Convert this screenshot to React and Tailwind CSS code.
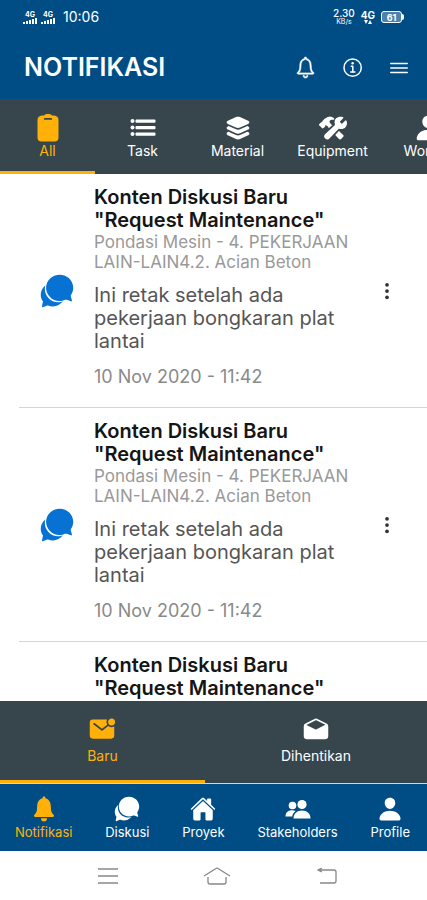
import React, { useState } from "react";
import clsx from "clsx";
import {
  IoIosNotifications,
  IoIosNotificationsOutline,
  IoIosChatbubbles,
} from "react-icons/io";
import {
  IoInformationCircleOutline,
  IoMenuOutline,
  IoLayers,
  IoPerson,
  IoHome,
  IoConstruct,
  IoMailUnread,
  IoMailOpen,
  IoEllipsisVertical,
} from "react-icons/io5";

const Clipboard = ({ size }) => (
  <svg viewBox="0 0 28 28" width={size} height={size} fill="currentColor">
    <path
      fillRule="evenodd"
      d="M8 1.500h2Q11 0 12.500 0h3Q17 0 18 1.500h2Q24.500 2 24.500 6v17.500q0 4-4 4h-13q-4 0-4-4V6Q3.500 2 8 1.500ZM11 4q-1.200 0-1.200.9t1.200.9h6q1.200 0 1.200-.9T17 4Z"
    />
  </svg>
);

const List = ({ size }) => (
  <svg viewBox="0 0 28 28" width={size} height={size} fill="currentColor">
    <circle cx="3.500" cy="7" r="2" />
    <circle cx="3.500" cy="13.500" r="2" />
    <circle cx="3.500" cy="20" r="2" />
    <rect x="6.500" y="5.400" width="20" height="3.400" rx="1" />
    <rect x="6.500" y="11.900" width="20" height="3.400" rx="1" />
    <rect x="6.500" y="18.400" width="20" height="3.400" rx="1" />
  </svg>
);

const People = ({ size }) => (
  <svg viewBox="0 0 26 26" width={size} height={size} fill="currentColor">
    <circle cx="17" cy="8.500" r="4.600" />
    <path d="M8.500 22.500c0-5 3.500-8 8.500-8s8.500 3 8.500 8Z" />
    <circle cx="7.500" cy="9.500" r="3.800" />
    <path d="M.5 20.500c0-4 2.500-6.300 6.500-6.300 1.500 0 2.600.3 3.600.9-2 1.500-3 3.200-3.400 5.400Z" />
  </svg>
);

const categories = [
  { id: "all", label: "All", icon: Clipboard },
  { id: "task", label: "Task", icon: List },
  { id: "material", label: "Material", icon: IoLayers },
  { id: "equipment", label: "Equipment", icon: IoConstruct },
  { id: "worker", label: "Worker", icon: IoPerson },
];

const statuses = [
  { id: "baru", label: "Baru", icon: IoMailUnread },
  { id: "dihentikan", label: "Dihentikan", icon: IoMailOpen },
];

const pages = [
  { id: "notifikasi", label: "Notifikasi", icon: IoIosNotifications, size: 32 },
  { id: "diskusi", label: "Diskusi", icon: IoIosChatbubbles, size: 30 },
  { id: "proyek", label: "Proyek", icon: IoHome, size: 26 },
  { id: "stakeholders", label: "Stakeholders", icon: People, size: 26 },
  { id: "profile", label: "Profile", icon: IoPerson, size: 26 },
];

const notifications = [1, 2, 3].map((id) => ({
  id,
  title: 'Konten Diskusi Baru "Request Maintenance"',
  task: "Pondasi Mesin - 4. PEKERJAAN LAIN-LAIN4.2. Acian Beton",
  message: "Ini retak setelah ada pekerjaan bongkaran plat lantai",
  date: "10 Nov 2020 - 11:42",
}));

const Signal = () => (
  <span className="flex flex-col items-center">
    <span className="text-[7px] leading-[7px] font-bold">4G</span>
    <svg viewBox="0 0 14 6" className="h-[6px] w-[14px]" fill="currentColor">
      <path d="M0 4h2v2H0zM3 3h2v3H3zM6 2h2v4H6zM9 1h2v5H9zM12 0h2v6h-2z" />
    </svg>
  </span>
);

const StatusBar = () => (
  <div className="flex h-[34px] items-center justify-between px-[23px]">
    <div className="flex items-center gap-1">
      <Signal />
      <Signal />
      <span className="ml-1 text-sm">10:06</span>
    </div>
    <div className="flex items-center gap-1.5">
      <span className="flex flex-col items-center">
        <span className="text-[10px] leading-[10px] font-medium">2.30</span>
        <span className="text-[7px] leading-[8px]">KB/s</span>
      </span>
      <span className="flex flex-col items-center">
        <span className="text-[10px] leading-[9px] font-bold">4G</span>
        <svg viewBox="0 0 8 4" className="h-1 w-2" fill="currentColor">
          <path d="M0 0h4L2 4zM4 4h4L6 0z" />
        </svg>
      </span>
      <span className="flex items-center">
        <span className="flex h-3 w-[21px] items-center justify-center rounded-[3px] border border-white bg-white/30 text-[9px] leading-[9px] font-bold">
          61
        </span>
        <span className="h-[6px] w-[2px] rounded-r-sm bg-white" />
      </span>
    </div>
  </div>
);

const Header = () => (
  <header className="shrink-0 bg-[#004d85] text-white">
    <StatusBar />
    <div className="flex h-[65px] items-center justify-between pt-0.5 pr-4 pl-6">
      <h1 className="text-[25px] font-semibold">NOTIFIKASI</h1>
      <div className="flex items-center gap-[22px]">
        <button aria-label="Notifications">
          <IoIosNotificationsOutline size={27} stroke="currentColor" strokeWidth={10} />
        </button>
        <button aria-label="Info">
          <IoInformationCircleOutline size={24} />
        </button>
        <button aria-label="Menu">
          <IoMenuOutline size={24} />
        </button>
      </div>
    </div>
  </header>
);

const NotificationItem = ({ item }) => (
  <li className="flex pl-[19px]">
    <div className="flex flex-1 items-center border-b border-gray-300 pt-3 pb-[18px]">
      <IoIosChatbubbles size={40} className="mt-1.5 mr-[17px] ml-[18px] shrink-0 text-[#0872d4]" />
      <div className="flex-1">
        <h2 className="text-xl leading-[23px] font-semibold text-[#151515]">{item.title}</h2>
        <p className="text-[17px] leading-5 text-[#999]">{item.task}</p>
        <p className="mt-3 text-xl leading-[23px] text-[#555]">{item.message}</p>
        <p className="mt-3 text-lg leading-6 text-[#8a8a8a]">{item.date}</p>
      </div>
      <button aria-label="Options" className="mt-1.5 mr-[30px] ml-4 shrink-0 text-[#333]">
        <IoEllipsisVertical size={20} />
      </button>
    </div>
  </li>
);

export default function App() {
  const [category, setCategory] = useState("all");
  const [status, setStatus] = useState("baru");
  const [page, setPage] = useState("notifikasi");

  return (
    <div className="flex h-screen flex-col bg-white font-['Inter',sans-serif]">
      <Header />

      {/* Category tabs, scroll sideways */}
      <nav className="flex shrink-0 overflow-x-auto bg-[#37464d] [scrollbar-width:none]">
        {categories.map(({ id, label, icon: Icon }) => (
          <button
            key={id}
            onClick={() => setCategory(id)}
            className={clsx(
              "flex h-[75px] w-[95px] shrink-0 flex-col items-center border-b-3 pt-[15px]",
              category === id ? "border-[#ffb10a] text-[#ffb10a]" : "border-transparent text-white"
            )}
          >
            <Icon size={28} />
            <span className="text-sm leading-[18px]">{label}</span>
          </button>
        ))}
      </nav>

      <ul className="min-h-0 flex-1 overflow-y-auto [scrollbar-width:none]">
        {notifications.map((item) => (
          <NotificationItem key={item.id} item={item} />
        ))}
      </ul>

      {/* Status tabs */}
      <nav className="flex shrink-0 border-b border-gray-300 bg-[#37464d]">
        {statuses.map(({ id, label, icon: Icon }) => (
          <button
            key={id}
            onClick={() => setStatus(id)}
            className={clsx(
              "flex h-[82px] flex-col items-center gap-[3px] border-b-3 pt-[14px] first:w-[48%] last:flex-1",
              status === id ? "border-[#ffb10a] text-[#ffb10a]" : "border-transparent text-white"
            )}
          >
            <Icon size={28} />
            <span className="text-sm">{label}</span>
          </button>
        ))}
      </nav>

      {/* Page navigation */}
      <nav className="flex h-[67px] shrink-0 justify-between bg-[#004d85] pt-3 pr-[17px] pl-[15px]">
        {pages.map(({ id, label, icon: Icon, size }) => (
          <button
            key={id}
            onClick={() => setPage(id)}
            className={clsx(
              "flex flex-col items-center",
              page === id ? "text-[#ffb10a]" : "text-white"
            )}
          >
            <span className="flex h-[26px] items-center justify-center">
              <Icon size={size} />
            </span>
            <span className="text-[13px] leading-5">{label}</span>
          </button>
        ))}
      </nav>

      {/* System buttons */}
      <div className="grid h-[49px] shrink-0 grid-cols-3 place-items-center pr-[45px] pl-[53px] text-[#888]">
        <button aria-label="Recent apps">
          <svg viewBox="0 0 20 16" className="h-4 w-5" stroke="currentColor" strokeWidth="1.5">
            <path d="M0 1h20M0 8h20M0 15h20" />
          </svg>
        </button>
        <button aria-label="Home">
          <svg viewBox="0 0 28 18" className="h-[18px] w-7" fill="none" stroke="currentColor" strokeWidth="1.3">
            <path d="M1 9 13 1.5q1-.7 2 0L27 9M5 10v5q0 2 2 2h14q2 0 2-2v-5" />
          </svg>
        </button>
        <button aria-label="Back">
          <svg viewBox="0 0 20 16" className="h-4 w-5" fill="none" stroke="currentColor" strokeWidth="1.3">
            <path d="M1 2h16q2 0 2 2v9q0 2-2 2H3M5 0 1 2l4 2" />
          </svg>
        </button>
      </div>
    </div>
  );
}
